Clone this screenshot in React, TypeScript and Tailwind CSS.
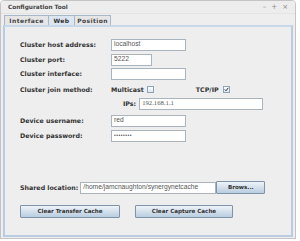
import React from 'react'

const font = { fontFamily: '"DejaVu Sans", sans-serif' }

const Field = ({ value, w, serif, dots }: { value: string; w: string; serif?: boolean; dots?: boolean }) => (
  <div
    className={`${w} h-[12px] bg-white border border-[#a9b4bf] px-[2px] flex items-center ${dots ? 'text-[5px] tracking-[0.5px]' : 'text-[6.7px]'} text-[#555] leading-none overflow-hidden whitespace-nowrap`}
    style={{ fontFamily: serif ? '"Liberation Serif", serif' : '"Liberation Sans", sans-serif' }}
  >
    {value}
  </div>
)

const Check = ({ checked }: { checked?: boolean }) => (
  <div className="w-[7px] h-[7px] border border-[#8fa3b8] bg-gradient-to-b from-white to-[#dce6f0] flex items-center justify-center">
    {checked && (
      <svg width="5" height="5" viewBox="0 0 5 5">
        <path d="M0.8 2.5 L2 3.8 L4.3 0.8" stroke="#333" strokeWidth="1" fill="none" />
      </svg>
    )}
  </div>
)

const Button = ({ label, w }: { label: string; w: string }) => (
  <div className={`${w} h-[13px] border border-[#7f93a8] rounded-[1px] bg-gradient-to-b from-[#eef3f8] to-[#b9cde0] flex items-center justify-center text-[5.6px] font-bold text-[#333]`}>
    {label}
  </div>
)

const Label = ({ children }: { children: React.ReactNode }) => (
  <div className="w-[91px] text-[6.3px] font-bold text-[#333]">{children}</div>
)

const txt = 'text-[6.3px] font-bold text-[#333]'

export default function App() {
  return (
    <div className="w-[300px] h-[241px] bg-white" style={font}>
      <div className="w-[296px] h-[239px] bg-[#eeeeee] border border-[#c4c4c4] rounded-t-[4px] flex flex-col overflow-hidden">
        <div className="h-[13px] flex items-center justify-between px-[7px] bg-[#ededed] border-b border-[#e4e4e4]">
          <span className="text-[5.8px] font-bold text-[#444]">Configuration Tool</span>
          <div className="flex gap-[5px] text-[7px] text-[#888] leading-none">
            <span>–</span>
            <span>+</span>
            <span>×</span>
          </div>
        </div>
        <div className="h-[10px] flex items-end px-[3px] mt-[1px]">
          <div className="h-[10px] w-[45px] border border-b-0 border-[#a8b8c8] bg-[#e6e6e6] flex items-center justify-center text-[6px] font-bold text-[#444] tracking-[0.4px]">
            Interface
          </div>
          <div className="h-[10px] w-[25px] border-t border-[#a8b8c8] bg-[#dbe6f1] flex items-center justify-center text-[6px] font-bold text-[#333] tracking-[0.4px]">
            Web
          </div>
          <div className="h-[10px] w-[37px] border border-b-0 border-[#a8b8c8] bg-[#e6e6e6] flex items-center justify-center text-[6px] font-bold text-[#444] tracking-[0.4px]">
            Position
          </div>
        </div>
        <div className="flex-1 mx-[2px] mb-[1px] border-2 border-[#b8cde2] border-t-[#c6d8ea] pl-[15px] pt-[11px] flex flex-col">
          <div className="flex items-center h-[13px]">
            <Label>Cluster host address:</Label>
            <Field value="localhost" w="w-[75px]" />
          </div>
          <div className="flex items-center h-[13px] mt-[2px]">
            <Label>Cluster port:</Label>
            <Field value="5222" w="w-[41px]" />
          </div>
          <div className="flex items-center h-[13px] mt-[1px]">
            <Label>Cluster interface:</Label>
            <Field value="" w="w-[75px]" />
          </div>
          <div className="flex items-center h-[13px] mt-[3px]">
            <Label>Cluster join method:</Label>
            <span className={`${txt} mr-[3px]`}>Multicast</span>
            <Check />
            <span className={`${txt} ml-[42px] mr-[4px]`}>TCP/IP</span>
            <Check checked />
          </div>
          <div className="flex items-center h-[13px] mt-[1px] pl-[103px]">
            <span className={`${txt} mr-[3px]`}>IPs:</span>
            <Field value="192.168.1.1" w="w-[124px]" serif />
          </div>
          <div className="flex items-center h-[13px] mt-[4px]">
            <Label>Device username:</Label>
            <Field value="red" w="w-[75px]" />
          </div>
          <div className="flex items-center h-[13px] mt-[2px]">
            <Label>Device password:</Label>
            <Field value="••••••••" w="w-[75px]" dots />
          </div>
          <div className="flex items-center h-[13px] mt-[39px]">
            <span className={`${txt} mr-[2px]`}>Shared location:</span>
            <Field value="/home/jamcnaughton/synergynetcache" w="w-[136px]" />
            <Button label="Brows..." w="w-[49px]" />
          </div>
          <div className="flex items-center h-[13px] mt-[11px] gap-[15px]">
            <Button label="Clear Transfer Cache" w="w-[100px]" />
            <Button label="Clear Capture Cache" w="w-[98px]" />
          </div>
        </div>
      </div>
    </div>
  )
}
